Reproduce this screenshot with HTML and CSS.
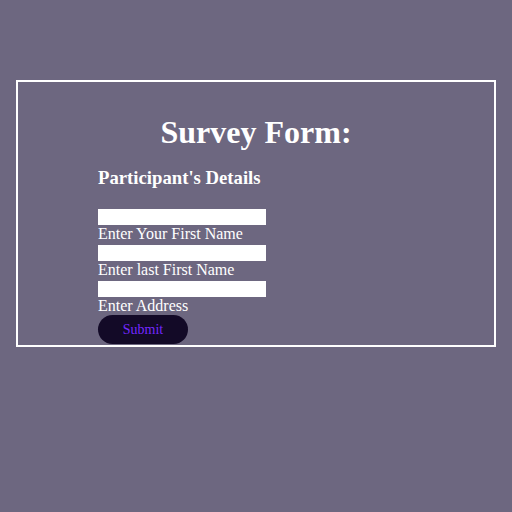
FILE: index.html
```html
<!DOCTYPE html>
<html>
<head>
<meta charset="utf-8">
<title>Survey Form</title>
<link rel="stylesheet" href="styles.css">
</head>
<body>
<div class="card">
  <h1 class="title">Survey Form:</h1>
  <form class="form">
    <h3 class="section">Participant's Details</h3>
    <input class="field" type="text" id="first">
    <label class="label" for="first">Enter Your First Name</label>
    <input class="field" type="text" id="last">
    <label class="label" for="last">Enter last First Name</label>
    <input class="field" type="text" id="addr">
    <label class="label" for="addr">Enter Address</label>
    <button class="submit" type="button">Submit</button>
  </form>
</div>
</body>
</html>
```
FILE: styles.css
```css
html, body {
  margin: 0;
  padding: 0;
}
body {
  background: #6d6780;
  font-family: "Liberation Serif", "Times New Roman", serif;
  color: #ffffff;
  padding-top: 80px;
}
.card {
  margin: 0 16px;
  border: 2px solid #ffffff;
  padding: 32px 0 1px;
}
.title {
  margin: 0;
  font-size: 32px;
  line-height: normal;
  font-weight: bold;
  text-align: center;
}
.form {
  display: flex;
  flex-direction: column;
  align-items: flex-start;
  padding-left: 80px;
}
.section {
  margin: 16px 0 18px;
  font-size: 18.72px;
  line-height: normal;
  font-weight: bold;
}
.field {
  display: block;
  box-sizing: border-box;
  width: 168px;
  height: 16px;
  margin: 2px 0 0;
  padding: 0;
  border: none;
  background: #ffffff;
}
.label {
  display: block;
  font-size: 16px;
  line-height: 18px;
  height: 18px;
}
.submit {
  width: 90px;
  height: 29px;
  margin: 0;
  border: none;
  border-radius: 15px;
  background: #130a27;
  color: #7428ff;
  font-family: "Liberation Serif", "Times New Roman", serif;
  font-size: 14px;
  padding: 0;
}
```
